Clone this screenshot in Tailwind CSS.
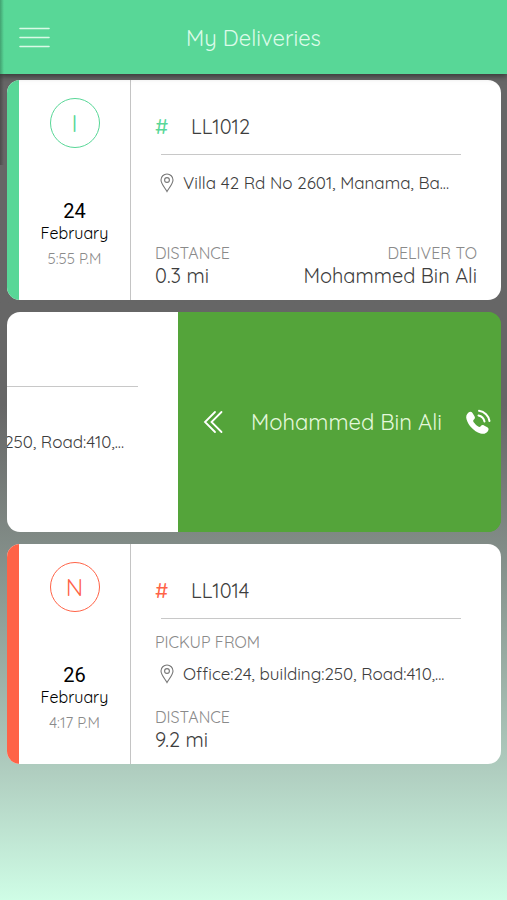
<!DOCTYPE html>
<html lang="en">
<head>
<meta charset="utf-8">
<meta name="viewport" content="width=device-width, initial-scale=1">
<title>My Deliveries</title>
<script src="https://cdn.jsdelivr.net/npm/@tailwindcss/browser@4"></script>
</head>
<body class="relative flex min-h-screen flex-col bg-linear-to-b from-[#666666] from-45% via-[#acc8bb] via-84% to-[#cffde6] font-['Quicksand','Lato',sans-serif] text-[#3d3d3d]">
<!-- Shadow along the drawer's edge -->
<div class="absolute top-0 left-0 z-20 h-[165px] w-1 bg-linear-to-r from-black/25 to-transparent"></div>
<header class="relative z-10 grid h-[74px] grid-cols-[1fr_auto_1fr] items-center bg-[#58d797] px-[18px] shadow-[0_2px_6px_rgba(0,0,0,0.5)]">
  <button type="button" aria-label="Open menu" class="w-8 text-[#d9fae6]">
    <svg class="block h-6 w-8" viewBox="0 0 32 24" fill="none" stroke="currentColor" stroke-width="1.6" stroke-linecap="round"><path d="M2 3.500h29M2 12.500h29M2 21.500h29"/></svg>
  </button>
  <h1 class="pt-0.5 text-[22px] leading-7 text-[#dcfbe9]">My Deliveries</h1>
</header>

<main class="flex flex-col gap-3 pt-[6px] pr-[6px] pl-[7px]">
  <article class="flex h-[220px] overflow-hidden rounded-[13px] bg-white">
    <div class="w-3 shrink-0 bg-[#58d797]"></div>
    <div class="flex w-28 shrink-0 flex-col items-center border-r border-[#c4c4c4] pt-[18px]">
      <div class="flex size-[50px] items-center justify-center rounded-full border border-[#58d797] text-2xl text-[#58d797]">I</div>
      <time class="mt-[52px] flex flex-col items-center">
        <span class="font-['Roboto'] text-xl leading-[22px] text-black">24</span>
        <span class="text-base leading-[22px] text-black">February</span>
        <span class="mt-1 text-[15px] leading-[22px] text-[#8a8a8a]">5:55 P.M</span>
      </time>
    </div>
    <div class="flex min-w-0 flex-1 flex-col pt-[35px] pr-6 pb-3 pl-6">
      <h2 class="flex text-xl leading-6"><span class="w-9 shrink-0 font-medium text-[#58d797]">#</span>LL1012</h2>
      <hr class="mt-[15px] mr-4 ml-[6px] border-[#c8c8c8]">
      <p class="mt-4 flex items-center gap-2 pl-1 text-[17px] leading-6">
        <svg class="h-5 w-4 shrink-0" viewBox="0 0 16 20" fill="none" stroke="#777" stroke-width="1.1" aria-hidden="true"><path d="M8 18.5C6.500 15.500 2 11 2 7a6 6 0 0 1 12 0c0 4-4.500 8.500-6 11.500z"/><circle cx="8" cy="7" r="2.400"/></svg>
        Villa 42 Rd No 2601, Manama, Ba...
      </p>
      <dl class="mt-auto flex justify-between">
        <div><dt class="text-base leading-[22px] text-[#8a8a8a]">DISTANCE</dt><dd class="text-xl leading-6">0.3 mi</dd></div>
        <div class="text-right"><dt class="text-base leading-[22px] text-[#8a8a8a]">DELIVER TO</dt><dd class="text-xl leading-6">Mohammed Bin Ali</dd></div>
      </dl>
    </div>
  </article>

  <article class="flex h-[220px] overflow-hidden rounded-[13px] bg-linear-to-r from-white from-50% to-[#54a43a] to-50%">
    <div class="flex min-w-0 flex-1 flex-col items-end overflow-hidden pt-[74px]">
      <hr class="mr-10 w-full border-[#c8c8c8]">
      <p class="mt-[43px] mr-[54px] text-[17px] leading-6 whitespace-nowrap">Office:24, building:250, Road:410,...</p>
    </div>
    <button type="button" class="flex w-[323px] shrink-0 items-center bg-[#54a43a] pr-[9px] pl-[25px] text-[#e4f8dc]">
      <svg class="h-6 w-5 shrink-0" viewBox="0 0 20 24" fill="none" stroke="#fff" stroke-width="1.800" stroke-linecap="round" aria-hidden="true"><path d="M12 2L2 12l10 10M18.500 2L8.500 12l10 10"/></svg>
      <span class="flex-1 pl-1.5 text-center text-[22px] leading-7">Mohammed Bin Ali</span>
      <svg class="size-7 shrink-0" viewBox="0 0 28 28" aria-hidden="true"><path fill="#fff" d="M4.500 4.500c1.500-1.200 3-1 4 .5l2 3.200c.8 1.300.5 2.400-.5 3.300-1 .8-1 1.700-.3 2.800a16 16 0 0 0 4.500 4.300c1 .6 1.800.5 2.500-.4.900-1.200 2-1.500 3.300-.8l3.300 1.900c1.500.9 1.700 2.200.7 3.700-1.600 2.500-4.300 3.500-7.500 2.400C9.500 23.200 4.500 17.500 2.600 11.500 1.700 8.500 2.400 6.200 4.500 4.500z"/><path fill="none" stroke="#fff" stroke-width="2" stroke-linecap="round" d="M14.500 7.500c3 .6 5.300 2.900 6 6M15 2.800c5.500.7 9.700 4.900 10.500 10.200"/></svg>
    </button>
  </article>

  <article class="flex h-[220px] overflow-hidden rounded-[13px] bg-white">
    <div class="w-3 shrink-0 bg-[#ff6347]"></div>
    <div class="flex w-28 shrink-0 flex-col items-center border-r border-[#c4c4c4] pt-[18px]">
      <div class="flex size-[50px] items-center justify-center rounded-full border border-[#ff6347] text-2xl text-[#ff6347]">N</div>
      <time class="mt-[52px] flex flex-col items-center">
        <span class="font-['Roboto'] text-xl leading-[22px] text-black">26</span>
        <span class="text-base leading-[22px] text-black">February</span>
        <span class="mt-1 text-[15px] leading-[22px] text-[#8a8a8a]">4:17 P.M</span>
      </time>
    </div>
    <div class="flex min-w-0 flex-1 flex-col pt-[35px] pr-6 pb-3 pl-6">
      <h2 class="flex text-xl leading-6"><span class="w-9 shrink-0 font-medium text-[#ff6347]">#</span>LL1014</h2>
      <hr class="mt-[15px] mr-4 ml-[6px] border-[#c8c8c8]">
      <h3 class="mt-3 text-base leading-[22px] text-[#8a8a8a]">PICKUP FROM</h3>
      <p class="mt-[9px] flex items-center gap-2 pl-1 text-[17px] leading-6">
        <svg class="h-5 w-4 shrink-0" viewBox="0 0 16 20" fill="none" stroke="#777" stroke-width="1.1" aria-hidden="true"><path d="M8 18.5C6.500 15.500 2 11 2 7a6 6 0 0 1 12 0c0 4-4.500 8.500-6 11.500z"/><circle cx="8" cy="7" r="2.400"/></svg>
        Office:24, building:250, Road:410,...
      </p>
      <dl class="mt-auto">
        <dt class="text-base leading-[22px] text-[#8a8a8a]">DISTANCE</dt><dd class="text-xl leading-6">9.2 mi</dd>
      </dl>
    </div>
  </article>
</main>
</body>
</html>
